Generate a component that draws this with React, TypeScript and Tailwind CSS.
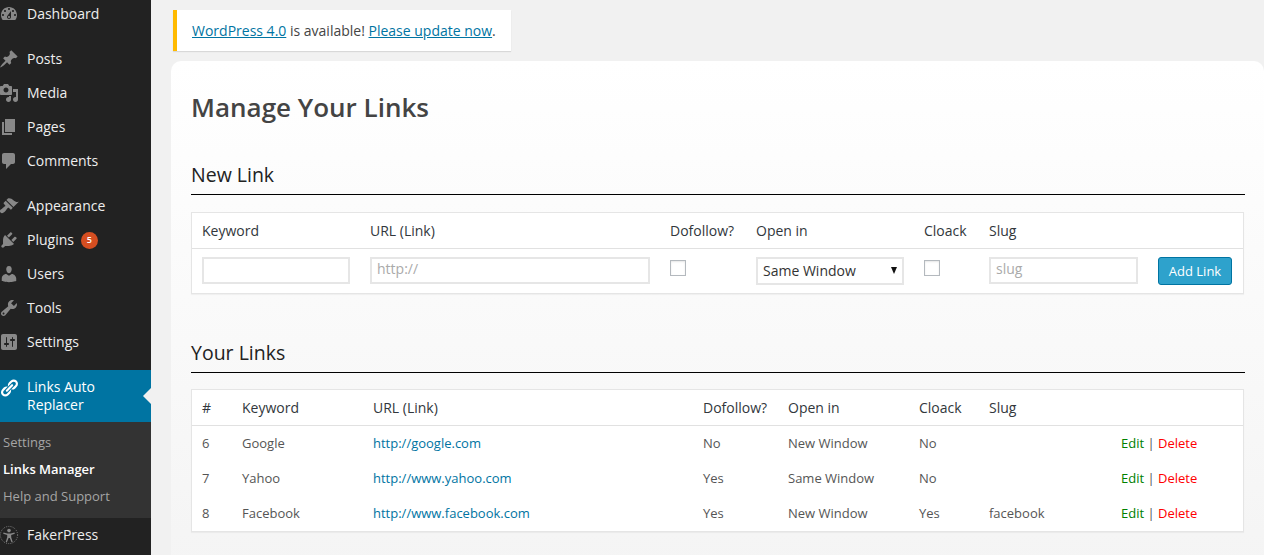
const icons = {
  dashboard:
    "M3.76 16h12.48c1.1-1.37 1.76-3.11 1.76-5 0-4.42-3.58-8-8-8s-8 3.58-8 8c0 1.89.66 3.63 1.76 5zM10 4c.55 0 1 .45 1 1s-.45 1-1 1-1-.45-1-1 .45-1 1-1zM6 6c.55 0 1 .45 1 1s-.45 1-1 1-1-.45-1-1 .45-1 1-1zm8 0c.55 0 1 .45 1 1s-.45 1-1 1-1-.45-1-1 .45-1 1-1zm-5.37 5.55L12 7v6c0 1.1-.9 2-2 2s-2-.9-2-2c0-.57.24-1.08.63-1.45zM4 10c.55 0 1 .45 1 1s-.45 1-1 1-1-.45-1-1 .45-1 1-1zm12 0c.55 0 1 .45 1 1s-.45 1-1 1-1-.45-1-1 .45-1 1-1zm-5 3c0-.55-.45-1-1-1s-1 .45-1 1 .45 1 1 1 1-.45 1-1z",
  posts:
    "M10.44 3.02l1.82-1.82 6.36 6.35-1.83 1.82c-1.05-.68-2.48-.57-3.41.36l-.75.75c-.92.93-1.04 2.35-.35 3.41l-1.83 1.82-2.41-2.41-2.8 2.79c-.42.42-3.38 2.71-3.8 2.29s1.86-3.39 2.28-3.81l2.79-2.79L4.1 9.36l1.83-1.82c1.05.69 2.48.57 3.4-.36l.75-.75c.93-.92 1.05-2.35.36-3.41z",
  media:
    "M13 11V4c0-.55-.45-1-1-1h-1.67L9 1H5L3.67 3H2c-.55 0-1 .45-1 1v7c0 .55.45 1 1 1h10c.55 0 1-.45 1-1zM7 4.5c1.38 0 2.5 1.12 2.5 2.5S8.38 9.5 7 9.5 4.5 8.38 4.5 7 5.62 4.5 7 4.5zM14 6h5v10.5c0 1.38-1.12 2.5-2.5 2.5S14 17.88 14 16.5s1.12-2.5 2.5-2.5c.17 0 .34.02.5.05V9h-3V6zm-4 8.05V13h2v3.5c0 1.38-1.12 2.5-2.5 2.5S7 17.88 7 16.5 8.12 14 9.5 14c.17 0 .34.02.5.05z",
  pages: "M6 15V2h10v13H6zm-1 1h8v2H3V5h2v11z",
  comments:
    "M5 2h9c1.1 0 2 .9 2 2v7c0 1.1-.9 2-2 2h-2l-5 5v-5H5c-1.1 0-2-.9-2-2V4c0-1.1.9-2 2-2z",
  appearance:
    "M14.48 11.06L7.41 3.99l1.5-1.5c.5-.56 2.3-.47 3.51.32 1.21.8 1.43 1.28 2.91 2.1 1.18.64 2.45 1.26 4.45.85zm-.71.71L6.7 4.7 4.93 6.47c-.39.39-.39 1.02 0 1.41l1.06 1.06c.39.39.39 1.03 0 1.42-.6.6-1.43 1.11-2.21 1.69-.35.26-.7.53-1.01.84C1.43 13.25 0 15.06 1.5 16.56s3.31.07 4.67-1.27c.31-.31.58-.66.84-1.01.58-.78 1.09-1.61 1.69-2.21.39-.39 1.02-.39 1.41 0l1.06 1.06c.39.39 1.02.39 1.41 0z",
  plugins:
    "M13.11 4.36L9.87 7.6 8 5.73l3.24-3.24c.35-.34 1.05-.2 1.56.32.52.51.66 1.21.31 1.55zm-8 1.77l.91-1.12 9.01 9.01-1.19.84c-.71.71-2.63 1.16-3.82 1.16H6.14L4.9 17.26c-.59.59-1.54.59-2.12 0-.59-.58-.59-1.53 0-2.12l1.24-1.24v-3.88c0-1.13.4-3.19 1.09-3.89zm7.26 3.97l3.24-3.24c.34-.35 1.04-.21 1.55.31.52.51.66 1.21.31 1.55l-3.24 3.25z",
  users:
    "M10 9.25c-2.27 0-2.73-3.44-2.73-3.44C7 4.02 7.82 2 9.97 2c2.16 0 2.98 2.02 2.71 3.81 0 0-.41 3.44-2.68 3.44zm0 2.57L12.72 10c2.39 0 4.52 2.33 4.52 4.53v2.49s-3.65 1.13-7.24 1.13c-3.65 0-7.24-1.13-7.24-1.13v-2.49c0-2.25 1.94-4.48 4.47-4.48z",
  tools:
    "M16.68 9.77c-1.34 1.34-3.3 1.67-4.95.99l-5.41 6.52c-.99.99-2.59.99-3.58 0s-.99-2.59 0-3.57l6.52-5.42c-.68-1.65-.35-3.61.99-4.95 1.28-1.28 3.12-1.62 4.72-1.06l-2.89 2.89 2.82 2.82 2.86-2.87c.53 1.58.18 3.39-1.08 4.65zM3.81 16.21c.4.39 1.04.39 1.43 0 .4-.4.4-1.04 0-1.43-.39-.4-1.03-.4-1.43 0-.39.39-.39 1.03 0 1.43z",
  settings:
    "M18 16V4c0-1.1-.9-2-2-2H4c-1.1 0-2 .9-2 2v12c0 1.1.9 2 2 2h12c1.1 0 2-.9 2-2zM8 11h1c.55 0 1 .45 1 1s-.45 1-1 1H8v1.5c0 .28-.22.5-.5.5s-.5-.22-.5-.5V13H6c-.55 0-1-.45-1-1s.45-1 1-1h1V5.5c0-.28.22-.5.5-.5s.5.22.5.5V11zm5-2h-1c-.55 0-1-.45-1-1s.45-1 1-1h1V5.5c0-.28.22-.5.5-.5s.5.22.5.5V7h1c.55 0 1 .45 1 1s-.45 1-1 1h-1v5.5c0 .28-.22.5-.5.5s-.5-.22-.5-.5V9z",
  links:
    "M17.74 2.76c1.68 1.69 1.68 4.41 0 6.1l-1.53 1.52c-1.12 1.12-2.7 1.47-4.14 1.09l2.62-2.61.76-.77.76-.76c.84-.84.84-2.2 0-3.04-.84-.85-2.2-.85-3.04 0l-.77.76-3.38 3.38c-.37-1.44-.02-3.02 1.1-4.14l1.52-1.53c1.69-1.68 4.42-1.68 6.1 0zM8.59 13.43l5.34-5.34c.42-.42.42-1.1 0-1.52-.44-.43-1.13-.39-1.53 0l-5.33 5.34c-.42.42-.42 1.1 0 1.52.44.43 1.13.39 1.52 0zm-.76 2.29l4.14-4.15c.38 1.44.03 3.02-1.09 4.14l-1.52 1.53c-1.69 1.68-4.41 1.68-6.1 0-1.68-1.68-1.68-4.42 0-6.1l1.53-1.52c1.12-1.12 2.7-1.47 4.14-1.1l-4.14 4.15c-.85.84-.85 2.2 0 3.05.84.84 2.2.84 3.04 0z",
};

function Icon({ d, className = "text-[#888]" }: { d: string; className?: string }) {
  return (
    <svg viewBox="0 0 20 20" className={`w-5 h-5 -ml-px shrink-0 fill-current ${className}`}>
      <path d={d} />
    </svg>
  );
}

function FakerIcon() {
  return (
    <svg viewBox="0 0 20 20" className="w-5 h-5 -ml-px shrink-0 text-[#888] fill-current">
      <circle cx="10" cy="10" r="8.6" fill="none" stroke="currentColor" strokeWidth="0.9" strokeDasharray="1 1.2" />
      <circle cx="10" cy="5.6" r="1.8" />
      <path d="M4.5 7.6l3.8 1h3.4l3.8-1 .3 1.1-3.6 1.2v2.4l1.5 4.6-1.2.4-1.7-4.4h-1.2l-1.7 4.4-1.2-.4 1.5-4.6V9.9L4.2 8.7z" />
    </svg>
  );
}

function MenuItem({ icon, label, badge }: { icon: string; label: string; badge?: string }) {
  return (
    <div className="h-[34px] flex items-center text-sm text-[#eee]">
      <Icon d={icon} />
      <span className="ml-2">{label}</span>
      {badge && (
        <span className="ml-[7px] w-[17px] h-[17px] rounded-full bg-[#d54e21] text-white text-[9px] font-semibold flex items-center justify-center">
          {badge}
        </span>
      )}
    </div>
  );
}

function Sidebar() {
  return (
    <aside className="w-[151px] shrink-0 bg-[#222] h-[555px] overflow-hidden">
      <div className="-mt-[3px]">
        <MenuItem icon={icons.dashboard} label="Dashboard" />
      </div>
      <div className="mt-[11px]">
        <MenuItem icon={icons.posts} label="Posts" />
        <MenuItem icon={icons.media} label="Media" />
        <MenuItem icon={icons.pages} label="Pages" />
        <MenuItem icon={icons.comments} label="Comments" />
      </div>
      <div className="mt-[11px]">
        <MenuItem icon={icons.appearance} label="Appearance" />
        <MenuItem icon={icons.plugins} label="Plugins" badge="5" />
        <MenuItem icon={icons.users} label="Users" />
        <MenuItem icon={icons.tools} label="Tools" />
        <MenuItem icon={icons.settings} label="Settings" />
      </div>
      <div className="mt-[11px] relative h-[52px] bg-[#0074a2] flex items-start pt-2 text-sm leading-[18px] text-white">
        <Icon d={icons.links} className="text-white" />
        <span className="ml-2">
          Links Auto
          <br />
          Replacer
        </span>
        <span className="absolute right-0 top-[18px] border-y-[8px] border-y-transparent border-r-[8px] border-r-[#f1f1f1]" />
      </div>
      <ul className="bg-[#333] h-[96px] py-[7px] pl-[3px] text-[13px] text-[#a5a5a5]">
        <li className="h-[27px] leading-[27px]">Settings</li>
        <li className="h-[27px] leading-[27px] text-white font-semibold">Links Manager</li>
        <li className="h-[27px] leading-[27px]">Help and Support</li>
      </ul>
      <div className="h-[34px] flex items-center text-sm text-[#eee]">
        <FakerIcon />
        <span className="ml-2">FakerPress</span>
      </div>
    </aside>
  );
}

function Checkbox() {
  return <input type="checkbox" className="appearance-none block w-4 h-4 mt-[3px] border border-[#b4b9be] bg-white shadow-[inset_0_1px_2px_rgba(0,0,0,0.1)]" />;
}

const field =
  "block h-[27px] pl-[5px] pr-[6px] pb-[5px] bg-white border-2 border-[#e6e6e6] text-sm outline-none placeholder:text-[#aaa]";

const newCols = "grid grid-cols-[168px_300px_86px_168px_65px_169px_1fr] pl-[10px]";
const listCols = "grid grid-cols-[40px_131px_330px_85px_131px_70px_132px_1fr] pl-[10px]";

const links = [
  { id: 6, keyword: "Google", url: "http://google.com", follow: "No", open: "New Window", cloak: "No", slug: "" },
  { id: 7, keyword: "Yahoo", url: "http://www.yahoo.com", follow: "Yes", open: "Same Window", cloak: "No", slug: "" },
  { id: 8, keyword: "Facebook", url: "http://www.facebook.com", follow: "Yes", open: "New Window", cloak: "Yes", slug: "facebook" },
];

export default function App() {
  return (
    <div className="flex w-[1264px] h-[555px] overflow-hidden bg-[#f1f1f1] font-['Open_Sans',sans-serif]">
      <Sidebar />
      <main className="flex-1 min-w-0 pl-5">
        <div className="ml-[2px] mt-[10px] w-[338px] h-[41px] flex items-center pl-[15px] bg-white border-l-4 border-[#ffba00] shadow-[0_1px_1px_rgba(0,0,0,0.1)] text-sm text-[#444]">
          <p>
            <a href="#" className="text-[#0074a2] underline">WordPress 4.0</a> is available!{" "}
            <a href="#" className="text-[#0074a2] underline">Please update now</a>.
          </p>
        </div>

        <section className="mt-[10px] w-[1093px] h-[520px] rounded-[10px] bg-gradient-to-b from-white to-[#f4f4f4] pl-5 pt-[29px]">
          <div className="w-[1054px]">
            <h1 className="text-[26px] leading-[34px] font-semibold text-[#444]">Manage Your Links</h1>

            <h2 className="mt-[38px] text-[19.5px] leading-[26px] text-[#222] pb-[6px] border-b border-black">New Link</h2>
            <div className="mt-[17px] w-[1053px] border border-[#e5e5e5] bg-white shadow-[0_1px_1px_rgba(0,0,0,0.04)]">
              <div className={`${newCols} h-[36px] items-center border-b border-[#e1e1e1] text-sm text-[#32373c]`}>
                <span>Keyword</span>
                <span>URL (Link)</span>
                <span>Dofollow?</span>
                <span>Open in</span>
                <span>Cloack</span>
                <span>Slug</span>
                <span />
              </div>
              <div className={`${newCols} h-[44px] pt-2`}>
                <input className={`${field} w-[148px]`} />
                <input className={`${field} w-[280px]`} placeholder="http://" />
                <Checkbox />
                <div className="relative w-[148px] h-[28px]">
                  <select className="appearance-none w-full h-full pl-[5px] pr-[6px] bg-white border-2 border-[#e6e6e6] text-sm text-[#333] outline-none">
                    <option>Same Window</option>
                    <option>New Window</option>
                  </select>
                  <span className="absolute right-[7px] top-[10px] border-x-[3.5px] border-x-transparent border-t-[7px] border-t-[#111]" />
                </div>
                <Checkbox />
                <input className={`${field} w-[149px]`} placeholder="slug" />
                <button className="w-[74px] h-[28px] pt-px rounded-[3px] bg-[#2ea2cc] border border-[#0074a2] text-white text-[13px]">
                  Add Link
                </button>
              </div>
            </div>

            <h2 className="mt-[46px] text-[19.5px] leading-[26px] text-[#222] pb-[6px] border-b border-black">Your Links</h2>
            <div className="mt-4 w-[1053px] border border-[#e5e5e5] bg-white shadow-[0_1px_1px_rgba(0,0,0,0.04)]">
              <div className={`${listCols} h-[36px] items-center border-b border-[#e1e1e1] text-sm text-[#32373c]`}>
                <span>#</span>
                <span>Keyword</span>
                <span>URL (Link)</span>
                <span>Dofollow?</span>
                <span>Open in</span>
                <span>Cloack</span>
                <span>Slug</span>
                <span />
              </div>
              {links.map((link) => (
                <div key={link.id} className={`${listCols} h-[35px] items-center text-[13px] text-[#555]`}>
                  <span>{link.id}</span>
                  <span>{link.keyword}</span>
                  <a href="#" className="text-[#0074a2]">{link.url}</a>
                  <span>{link.follow}</span>
                  <span>{link.open}</span>
                  <span>{link.cloak}</span>
                  <span>{link.slug}</span>
                  <span>
                    <a href="#" className="text-[#008000]">Edit</a> | <a href="#" className="text-[#ff0000]">Delete</a>
                  </span>
                </div>
              ))}
            </div>
          </div>
        </section>
      </main>
    </div>
  );
}
